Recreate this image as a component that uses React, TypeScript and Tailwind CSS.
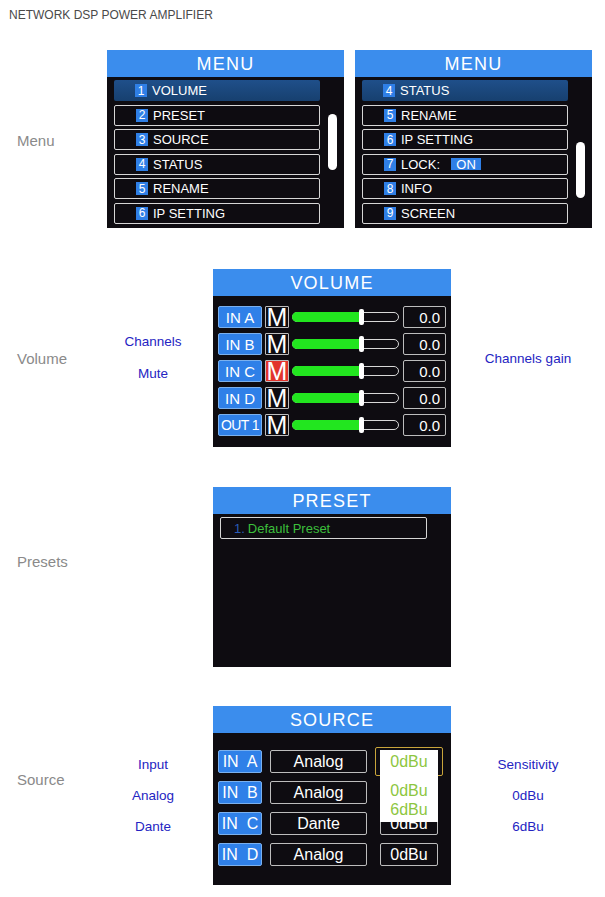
import React from 'react'

const font = { fontFamily: '"Liberation Sans", Arial, sans-serif' }

function Header({ title }: { title: string }) {
  return (
    <div className="h-[27px] bg-[#3b8ded] flex items-center justify-center text-white text-[18px] tracking-[1.2px] leading-none">
      {title}
    </div>
  )
}

type MenuItem = { n: string; label: string; lock?: boolean }

function MenuScreen({ items, scrollTop }: { items: MenuItem[]; scrollTop: string }) {
  return (
    <div className="w-[237px] h-[178px] bg-[#0e0c11] flex flex-col">
      <Header title="MENU" />
      <div className="flex pt-[3px] pl-[7px]">
        <div className="w-[206px] flex flex-col gap-[3.6px]">
          {items.map((it, i) => (
            <div
              key={it.n}
              className={`h-[21px] rounded-[2px] flex items-center pl-[21px] ${
                i === 0 ? 'bg-gradient-to-b from-[#1f4f8a] to-[#17406f]' : 'border-[1.5px] border-[#d6d6d6]'
              }`}
            >
              <span className="w-[12px] h-[13px] bg-[#2f7fe6] text-white text-[12px] leading-none flex items-center justify-center">
                {it.n}
              </span>
              <span className="ml-[5px] text-white text-[13px] leading-none">{it.label}</span>
              {it.lock && (
                <span className="ml-[11px] w-[30px] h-[12px] bg-[#2f7fe6] text-white text-[13px] leading-none flex items-center justify-center">
                  ON
                </span>
              )}
            </div>
          ))}
        </div>
        <div className={`ml-[8px] w-[9px] h-[56px] rounded-full bg-white ${scrollTop}`} />
      </div>
    </div>
  )
}

const volumeRows = [
  { ch: 'IN A', muted: false },
  { ch: 'IN B', muted: false },
  { ch: 'IN C', muted: true },
  { ch: 'IN D', muted: false },
  { ch: 'OUT 1', muted: false },
]

function VolumeScreen() {
  return (
    <div className="w-[238px] h-[178px] bg-[#0e0c11] flex flex-col">
      <Header title="VOLUME" />
      <div className="flex flex-col gap-[5px] pt-[10px] pl-[5px]">
        {volumeRows.map((r) => (
          <div key={r.ch} className="flex items-center h-[22px]">
            <div
              className={`w-[44px] h-[22px] bg-[#2f80e8] border border-[#7ab0ee] rounded-[2px] flex items-center justify-center text-white leading-none ${
                r.ch === 'OUT 1' ? 'text-[14px] tracking-[-0.6px]' : 'text-[15px]'
              }`}
            >
              {r.ch}
            </div>
            <div
              className={`ml-[3px] w-[24px] h-[22px] border border-[#bdbdbd] rounded-[1px] flex items-center justify-center text-white text-[25px] leading-[20px] ${
                r.muted ? 'bg-[#e2332c]' : 'bg-[#0e0c11]'
              }`}
            >
              M
            </div>
            <div className="ml-[3px] w-[107px] h-[10px] relative">
              <div className="absolute inset-0 rounded-full border-[1.5px] border-[#d8d8d8]" />
              <div className="absolute left-0 top-0 h-[10px] w-[68px] rounded-l-full bg-[#22e61f]" />
              <div className="absolute left-[67px] top-[-3px] w-[5px] h-[16px] rounded-[2px] bg-white" />
            </div>
            <div className="ml-[4px] w-[43px] h-[22px] border border-[#bdbdbd] rounded-[2px] flex items-center justify-end pr-[5px] text-white text-[15px] leading-none">
              0.0
            </div>
          </div>
        ))}
      </div>
    </div>
  )
}

function PresetScreen() {
  return (
    <div className="w-[238px] h-[180px] bg-[#0e0c11] flex flex-col">
      <Header title="PRESET" />
      <div className="pt-[3px] pl-[7px]">
        <div className="w-[207px] h-[22px] border-[1.5px] border-[#d6d6d6] rounded-[2px] flex items-center pl-[13px] text-[13px] leading-none">
          <span className="text-[#2a5cb8]">1.</span>
          <span className="ml-[3px] text-[#3cbf3c]">Default Preset</span>
        </div>
      </div>
    </div>
  )
}

const sourceRows = [
  { ch: 'IN  A', type: 'Analog' },
  { ch: 'IN  B', type: 'Analog' },
  { ch: 'IN  C', type: 'Dante' },
  { ch: 'IN  D', type: 'Analog' },
]

function SourceScreen() {
  return (
    <div className="w-[238px] h-[179px] bg-[#0e0c11] flex flex-col">
      <Header title="SOURCE" />
      <div className="relative flex flex-col gap-[8px] pt-[17px] pl-[5px]">
        {sourceRows.map((r) => (
          <div key={r.ch} className="flex items-center h-[23px]">
            <div className="w-[44px] h-[23px] bg-[#2f80e8] border border-[#7ab0ee] rounded-[2px] flex items-center justify-center text-white text-[16px] leading-none whitespace-pre">
              {r.ch}
            </div>
            <div className="ml-[8px] w-[97px] h-[23px] border border-[#bdbdbd] rounded-[2px] flex items-center justify-center text-white text-[16px] leading-none">
              {r.type}
            </div>
            <div className="ml-[13px] w-[58px] h-[23px] border border-[#bdbdbd] rounded-[2px] flex items-center justify-center text-white text-[16px] leading-none">
              0dBu
            </div>
          </div>
        ))}
        {/* open sensitivity dropdown */}
        <div className="absolute left-[162px] top-[14px] w-[68px] h-[29px] border-[1.5px] border-[#c9a53b] rounded-[2px]" />
        <div className="absolute left-[167px] top-[17px] w-[58px] h-[72px] bg-white text-[#8dc63f] text-[16px] leading-none">
          <div className="absolute inset-x-0 top-[4px] h-[16px] flex items-center justify-center">0dBu</div>
          <div className="absolute inset-x-0 top-[33px] h-[16px] flex items-center justify-center">0dBu</div>
          <div className="absolute inset-x-0 top-[52px] h-[16px] flex items-center justify-center">6dBu</div>
        </div>
      </div>
    </div>
  )
}

function Note({ children }: { children: React.ReactNode }) {
  return <div className="text-[#2424c2] text-[13.5px] leading-[16px]">{children}</div>
}

export default function App() {
  return (
    <div className="w-[605px] h-[897px] bg-white flex flex-col" style={font}>
      <div className="h-[50px] pt-[8px] pl-[9px] text-[12px] text-[#4a4a4a] leading-[14px]">
        NETWORK DSP POWER AMPLIFIER
      </div>

      {/* Menu */}
      <div className="flex items-center">
        <div className="w-[107px] pl-[17px] pt-[4px] text-[15px] text-[#8a8a8a]">Menu</div>
        <MenuScreen
          scrollTop="mt-[34px]"
          items={[
            { n: '1', label: 'VOLUME' },
            { n: '2', label: 'PRESET' },
            { n: '3', label: 'SOURCE' },
            { n: '4', label: 'STATUS' },
            { n: '5', label: 'RENAME' },
            { n: '6', label: 'IP SETTING' },
          ]}
        />
        <div className="ml-[11px]">
          <MenuScreen
            scrollTop="mt-[62px]"
            items={[
              { n: '4', label: 'STATUS' },
              { n: '5', label: 'RENAME' },
              { n: '6', label: 'IP SETTING' },
              { n: '7', label: 'LOCK:', lock: true },
              { n: '8', label: 'INFO' },
              { n: '9', label: 'SCREEN' },
            ]}
          />
        </div>
      </div>

      {/* Volume */}
      <div className="flex items-center mt-[41px]">
        <div className="w-[93px] pl-[17px] pt-[2px] text-[15px] text-[#8a8a8a]">Volume</div>
        <div className="w-[120px] flex flex-col items-center gap-[16px]">
          <Note>Channels</Note>
          <Note>Mute</Note>
        </div>
        <VolumeScreen />
        <div className="w-[154px] flex justify-center pt-[2px]">
          <Note>Channels gain</Note>
        </div>
      </div>

      {/* Presets */}
      <div className="flex items-center mt-[40px]">
        <div className="w-[213px] pl-[17px] pb-[30px] text-[15px] text-[#8a8a8a]">Presets</div>
        <PresetScreen />
      </div>

      {/* Source */}
      <div className="flex items-center mt-[39px]">
        <div className="w-[93px] pl-[17px] pb-[30px] text-[15px] text-[#8a8a8a]">Source</div>
        <div className="w-[120px] flex flex-col items-center gap-[15px]">
          <Note>Input</Note>
          <Note>Analog</Note>
          <Note>Dante</Note>
        </div>
        <SourceScreen />
        <div className="w-[154px] flex flex-col items-center gap-[15px]">
          <Note>Sensitivity</Note>
          <Note>0dBu</Note>
          <Note>6dBu</Note>
        </div>
      </div>
    </div>
  )
}
